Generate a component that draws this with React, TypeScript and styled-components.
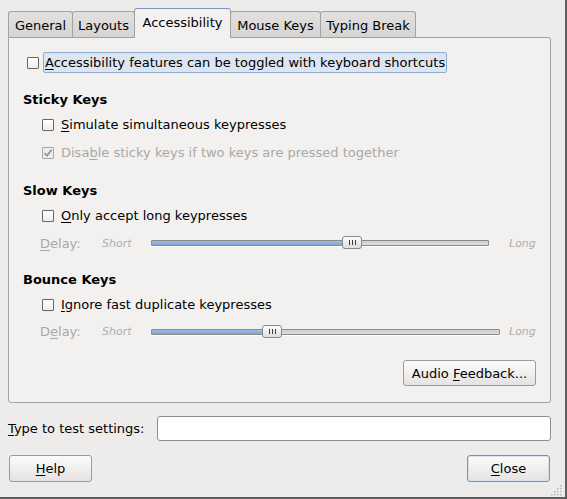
import React from "react";
import styled, { createGlobalStyle, css } from "styled-components";

const Global = createGlobalStyle`
  html, body { margin: 0; padding: 0; background: #edeceb; }
  body { font-family: "DejaVu Sans", "Liberation Sans", sans-serif; font-size: 13px; color: #000; }
  * { box-sizing: border-box; }
`;

const Window = styled.div`
  position: relative;
  width: 567px;
  height: 499px;
  background: #edeceb;
  border-right: 2px solid #5e5e5e;
  border-bottom: 2px solid #5e5e5e;
  padding: 8px 14px 0 8px;
  display: flex;
  flex-direction: column;
`;

const TabBar = styled.div`
  display: flex;
  align-items: flex-end;
  height: 30px;
  margin-bottom: -1px;
  position: relative;
  z-index: 1;
`;

const Tab = styled.div<{ $active?: boolean; $w: number }>`
  width: ${(p) => p.$w}px;
  height: 26px;
  margin-bottom: 1px;
  padding-top: 4px;
  line-height: 20px;
  text-align: center;
  border: 1px solid #a3a2a1;
  border-bottom: none;
  border-radius: 3px 3px 0 0;
  background: linear-gradient(#e2e1e0, #d5d4d3);
  white-space: nowrap;
  & + & { margin-left: -1px; }
  ${(p) =>
    p.$active &&
    css`
      height: 30px;
      margin-bottom: 0;
      background: #f2f1f0;
      border-top-color: #7b97c2;
      position: relative;
      z-index: 1;
    `}
`;

const Panel = styled.div`
  height: 366px;
  border: 1px solid #a3a2a1;
  border-radius: 0 3px 3px 3px;
  background: #f2f1f0;
  padding: 14px 14px 16px 14px;
  display: flex;
  flex-direction: column;
`;

const TopRow = styled.div`
  height: 21px;
  display: flex;
  align-items: center;
  padding-left: 4px;
`;

const FocusLabel = styled.span`
  margin-left: 4px;
  height: 21px;
  line-height: 19px;
  padding: 0 1px;
  border: 1px solid #8eabd0;
  border-radius: 2px;
  background: #dce5f0;
  white-space: nowrap;
`;

const Section = styled.div<{ $gap: number }>`
  margin-top: ${(p) => p.$gap}px;
  display: flex;
  flex-direction: column;
`;

const Heading = styled.div`
  height: 20px;
  line-height: 20px;
  font-weight: bold;
`;

const CheckRow = styled.div<{ $disabled?: boolean }>`
  height: 28px;
  display: flex;
  align-items: center;
  padding-left: 19px;
  color: ${(p) => (p.$disabled ? "#aaa8a6" : "#000")};
  white-space: nowrap;
`;

const RowLabel = styled.span`
  margin-left: 7px;
`;

const Box = styled.span<{ $disabled?: boolean }>`
  width: 12px;
  height: 12px;
  margin-top: 1px;
  flex: none;
  display: inline-flex;
  align-items: center;
  justify-content: center;
  border: 1px solid ${(p) => (p.$disabled ? "#a9a8a7" : "#666666")};
  border-radius: 1px;
  background: ${(p) =>
    p.$disabled ? "#eeeded" : "linear-gradient(#ffffff, #ececec)"};
`;

const DelayRow = styled.div<{ $h: number }>`
  height: ${(p) => p.$h}px;
  display: flex;
  align-items: center;
  padding-left: 17px;
  white-space: nowrap;
`;

const DelayLabel = styled.span`
  width: 62px;
  color: #aaa8a6;
  flex: none;
`;

const RangeLabel = styled.span<{ $w?: number }>`
  width: ${(p) => (p.$w ? `${p.$w}px` : "auto")};
  flex: none;
  font-size: 11px;
  font-style: italic;
  color: #b0aeac;
`;

const TrackArea = styled.div`
  width: 349px;
  flex: none;
  margin-right: 9px;
  display: flex;
  align-items: center;
`;

const Track = styled.div`
  position: relative;
  height: 6px;
  border: 1px solid #8c8b8a;
  border-radius: 1px;
  background: linear-gradient(#cfcecd, #dedddc);
  box-shadow: 0 1px 0 #ffffff;
`;

const Fill = styled.div`
  height: 100%;
  background: linear-gradient(#9dbde6, #7ea4d6);
  border-right: 1px solid #5e80b3;
`;

const Thumb = styled.div`
  position: absolute;
  top: -5px;
  width: 20px;
  height: 13px;
  margin-left: -10px;
  border: 1px solid #8a8988;
  border-radius: 3px;
  background: linear-gradient(#fdfdfd, #dedddc);
  display: flex;
  align-items: center;
  justify-content: center;
  gap: 2px;
  & > i {
    display: block;
    width: 1px;
    height: 5px;
    background: #3c3c3c;
  }
`;

const PanelFooter = styled.div`
  margin-top: auto;
  display: flex;
  justify-content: flex-end;
`;

const Button = styled.button<{ $w: number; $h?: number; $default?: boolean }>`
  width: ${(p) => p.$w}px;
  height: ${(p) => p.$h ?? 26}px;
  padding: 0;
  font: inherit;
  color: #000;
  border: 1px solid #9b9a99;
  border-radius: 3px;
  background: linear-gradient(#fbfbfb, #e4e3e2);
  ${(p) =>
    p.$default &&
    css`
      border-color: #7893bb;
      box-shadow: inset 0 0 0 1px #d6e2f0;
    `}
`;

const EntryRow = styled.div`
  margin-top: 13px;
  height: 25px;
  display: flex;
  align-items: center;
`;

const EntryLabel = styled.span`
  width: 149px;
  flex: none;
`;

const Entry = styled.div`
  flex: 1;
  height: 25px;
  background: #fff;
  border: 1px solid #8f8e8d;
  border-radius: 3px;
`;

const ButtonRow = styled.div`
  margin-top: 14px;
  display: flex;
  justify-content: space-between;
  padding-left: 1px;
  padding-right: 1px;
`;

const Grip = styled.svg`
  position: absolute;
  right: 2px;
  bottom: 1px;
`;

const U = styled.span`
  text-decoration: underline;
  text-underline-offset: 2px;
`;

function Check({ checked, disabled }: { checked?: boolean; disabled?: boolean }) {
  return (
    <Box $disabled={disabled}>
      {checked && (
        <svg width="10" height="10" viewBox="0 0 10 10">
          <path d="M1.5 5 L4 7.8 L8.5 1.8" fill="none" stroke="#8e8d8c" strokeWidth="1.6" />
        </svg>
      )}
    </Box>
  );
}

function Slider({ width, value }: { width: number; value: number }) {
  const px = Math.round(width * value);
  return (
    <TrackArea>
      <Track style={{ width }}>
        <Fill style={{ width: px }} />
        <Thumb style={{ left: px }}>
          <i />
          <i />
          <i />
        </Thumb>
      </Track>
    </TrackArea>
  );
}

const tabs = [
  { label: "General", w: 65 },
  { label: "Layouts", w: 63 },
  { label: "Accessibility", w: 97, active: true },
  { label: "Mouse Keys", w: 91 },
  { label: "Typing Break", w: 96 },
];

export default function App() {
  return (
    <>
      <Global />
      <Window>
        <TabBar>
          {tabs.map((t) => (
            <Tab key={t.label} $w={t.w} $active={t.active}>
              {t.label}
            </Tab>
          ))}
        </TabBar>
        <Panel>
          <TopRow>
            <Check />
            <FocusLabel>
              <U>A</U>ccessibility features can be toggled with keyboard shortcuts
            </FocusLabel>
          </TopRow>

          <Section $gap={17}>
            <Heading>Sticky Keys</Heading>
            <CheckRow>
              <Check />
              <RowLabel>
                <U>S</U>imulate simultaneous keypresses
              </RowLabel>
            </CheckRow>
            <CheckRow $disabled>
              <Check checked disabled />
              <RowLabel>
                Disa<U>b</U>le sticky keys if two keys are pressed together
              </RowLabel>
            </CheckRow>
          </Section>

          <Section $gap={15}>
            <Heading>Slow Keys</Heading>
            <CheckRow>
              <Check />
              <RowLabel>
                <U>O</U>nly accept long keypresses
              </RowLabel>
            </CheckRow>
            <DelayRow $h={28}>
              <DelayLabel>
                <U>D</U>elay:
              </DelayLabel>
              <RangeLabel $w={49}>Short</RangeLabel>
              <Slider width={338} value={0.592} />
              <RangeLabel>Long</RangeLabel>
            </DelayRow>
          </Section>

          <Section $gap={13}>
            <Heading>Bounce Keys</Heading>
            <CheckRow>
              <Check />
              <RowLabel>
                <U>I</U>gnore fast duplicate keypresses
              </RowLabel>
            </CheckRow>
            <DelayRow $h={27}>
              <DelayLabel>
                D<U>e</U>lay:
              </DelayLabel>
              <RangeLabel $w={49}>Short</RangeLabel>
              <Slider width={349} value={0.344} />
              <RangeLabel>Long</RangeLabel>
            </DelayRow>
          </Section>

          <PanelFooter>
            <Button $w={133}>
              Audio <U>F</U>eedback...
            </Button>
          </PanelFooter>
        </Panel>

        <EntryRow>
          <EntryLabel>
            <U>T</U>ype to test settings:
          </EntryLabel>
          <Entry />
        </EntryRow>

        <ButtonRow>
          <Button $w={83} $h={27}>
            <U>H</U>elp
          </Button>
          <Button $w={83} $h={27} $default>
            <U>C</U>lose
          </Button>
        </ButtonRow>

        <Grip width="12" height="12" viewBox="0 0 12 12">
          {[
            [9, 1], [9, 4], [6, 4], [9, 7], [6, 7], [3, 7], [9, 10], [6, 10], [3, 10], [0, 10],
          ].map(([x, y], i) => (
            <rect key={i} x={x} y={y} width="1.5" height="1.5" fill="#b7b6b5" />
          ))}
        </Grip>
      </Window>
    </>
  );
}
